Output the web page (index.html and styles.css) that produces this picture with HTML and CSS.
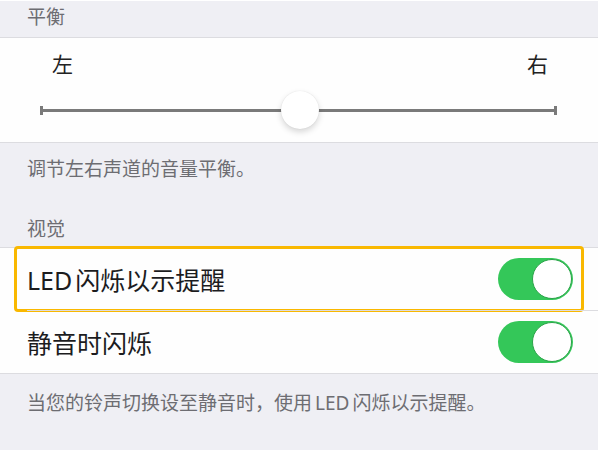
FILE: index.html
```html
<!DOCTYPE html>
<html lang="zh-CN">
<head>
    <meta charset="UTF-8">
    <meta name="viewport" content="width=device-width, initial-scale=1.0">
    <title>辅助功能</title>
    <link rel="stylesheet" href="styles.css">
</head>
<body>
    <div class="screen">
        <div class="group-title">平衡</div>

        <div class="card balance">
            <div class="balance-labels">
                <span>左</span>
                <span>右</span>
            </div>
            <div class="slider">
                <div class="track"></div>
                <div class="thumb"></div>
            </div>
        </div>

        <p class="note">调节左右声道的音量平衡。</p>

        <div class="group-title second">视觉</div>

        <div class="card">
            <div class="row highlighted">
                <span class="row-label">LED<span class="thin"></span>闪烁以示提醒</span>
                <span class="switch on"><span class="knob"></span></span>
                <!-- tutorial highlight -->
                <span class="focus-box"></span>
            </div>
            <div class="row">
                <span class="row-label">静音时闪烁</span>
                <span class="switch on"><span class="knob"></span></span>
            </div>
        </div>

        <p class="note last">当您的铃声切换设至静音时，使用<span class="thin"></span>LED<span class="thin"></span>闪烁以示提醒。</p>
    </div>
</body>
</html>
```

FILE: styles.css
```css
body {
    margin: 0;
    background-color: #ffffff;
    font-family: "Noto Sans", "Noto Sans CJK SC", sans-serif;
}

.screen {
    width: 598px;
    height: 449px;
    margin-top: 1px;
    background-color: #efeff4;
    overflow: hidden;
}

.group-title {
    height: 36px;
    padding-left: 27px;
    font-size: 19px;
    line-height: 32px;
    color: #6d6d72;
}

.group-title.second {
    height: 32px;
    line-height: 28px;
}

.card {
    background-color: #fefefe;
    border-top: 1px solid #dcdce0;
    border-bottom: 1px solid #dcdce0;
}

.balance {
    padding: 13px 0 12px 0;
}

.balance-labels {
    display: flex;
    justify-content: space-between;
    padding: 0 50px 0 52px;
    font-size: 21px;
    line-height: 26px;
    color: #222222;
    margin-bottom: 13px;
}

.slider {
    position: relative;
    height: 40px;
    margin: 0 41px 0 40px;
    display: flex;
    align-items: center;
}

.track {
    position: relative;
    flex: 1;
    height: 3px;
    background-color: #7a7a7a;
}

.track::before,
.track::after {
    content: "";
    position: absolute;
    top: -3px;
    width: 3px;
    height: 9px;
    background-color: #7a7a7a;
}

.track::before {
    left: 0;
}

.track::after {
    right: 0;
}

.thumb {
    position: absolute;
    left: 241px;
    top: 1px;
    width: 38px;
    height: 38px;
    border-radius: 50%;
    background-color: #ffffff;
    box-shadow: 0 3px 6px rgba(0,0,0,0.16), 0 0 1px rgba(0,0,0,0.12);
}

.note {
    margin: 0;
    padding: 14px 27px 0 27px;
    height: 58px;
    font-size: 19px;
    line-height: 24px;
    color: #6d6d72;
}

.note.last {
    padding-top: 17px;
}

.thin {
    display: inline-block;
    width: 3px;
}

.row {
    position: relative;
    height: 62px;
    display: flex;
    align-items: center;
    justify-content: space-between;
    padding: 0 25px 0 27px;
}

.row + .row::before {
    content: "";
    position: absolute;
    top: -1px;
    left: 27px;
    right: 0;
    height: 1px;
    background-color: #dcdce0;
}

.row + .row {
    margin-top: 1px;
}

.row-label {
    font-size: 25px;
    color: #1c1c1e;
}

.switch {
    position: relative;
    width: 75px;
    height: 42px;
    border-radius: 21px;
    background-color: #34c759;
}

.knob {
    position: absolute;
    right: 1px;
    top: 1px;
    width: 38px;
    height: 38px;
    border-radius: 50%;
    background-color: #ffffff;
    border: 1px solid #2aa348;
}

.focus-box {
    position: absolute;
    left: 14px;
    right: 14px;
    top: -2px;
    bottom: -2px;
    border: 3px solid #f9b800;
    border-radius: 4px;
}
```
